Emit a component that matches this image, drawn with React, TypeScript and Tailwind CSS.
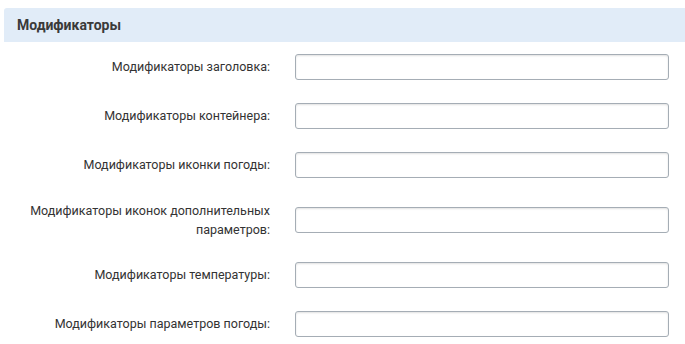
const fields: string[] = [
  'Модификаторы заголовка:',
  'Модификаторы контейнера:',
  'Модификаторы иконки погоды:',
  'Модификаторы иконок дополнительных параметров:',
  'Модификаторы температуры:',
  'Модификаторы параметров погоды:',
];

export default function App() {
  return (
    <div className="w-[685px] h-[344px] overflow-hidden bg-white pt-2 pl-1 font-['Roboto',sans-serif] text-[#333]">
      <div className="h-[34px] flex items-center bg-[#e1ecf8] pl-[13px] rounded-tl-[3px]">
        <h3 className="text-[14px] font-bold text-[#3a3a3a]">Модификаторы</h3>
      </div>
      {fields.map(label => (
        <div key={label} className="flex items-center py-[11.5px]">
          <label className="w-[266px] text-right text-[12.5px] leading-[19px] pl-6">{label}</label>
          <input
            type="text"
            className="ml-[25px] w-[374px] h-[26px] rounded-[3px] border border-[#a5adb5] bg-white shadow-[inset_0_1px_2px_rgba(0,0,0,0.12)] outline-none"
          />
        </div>
      ))}
    </div>
  );
}
